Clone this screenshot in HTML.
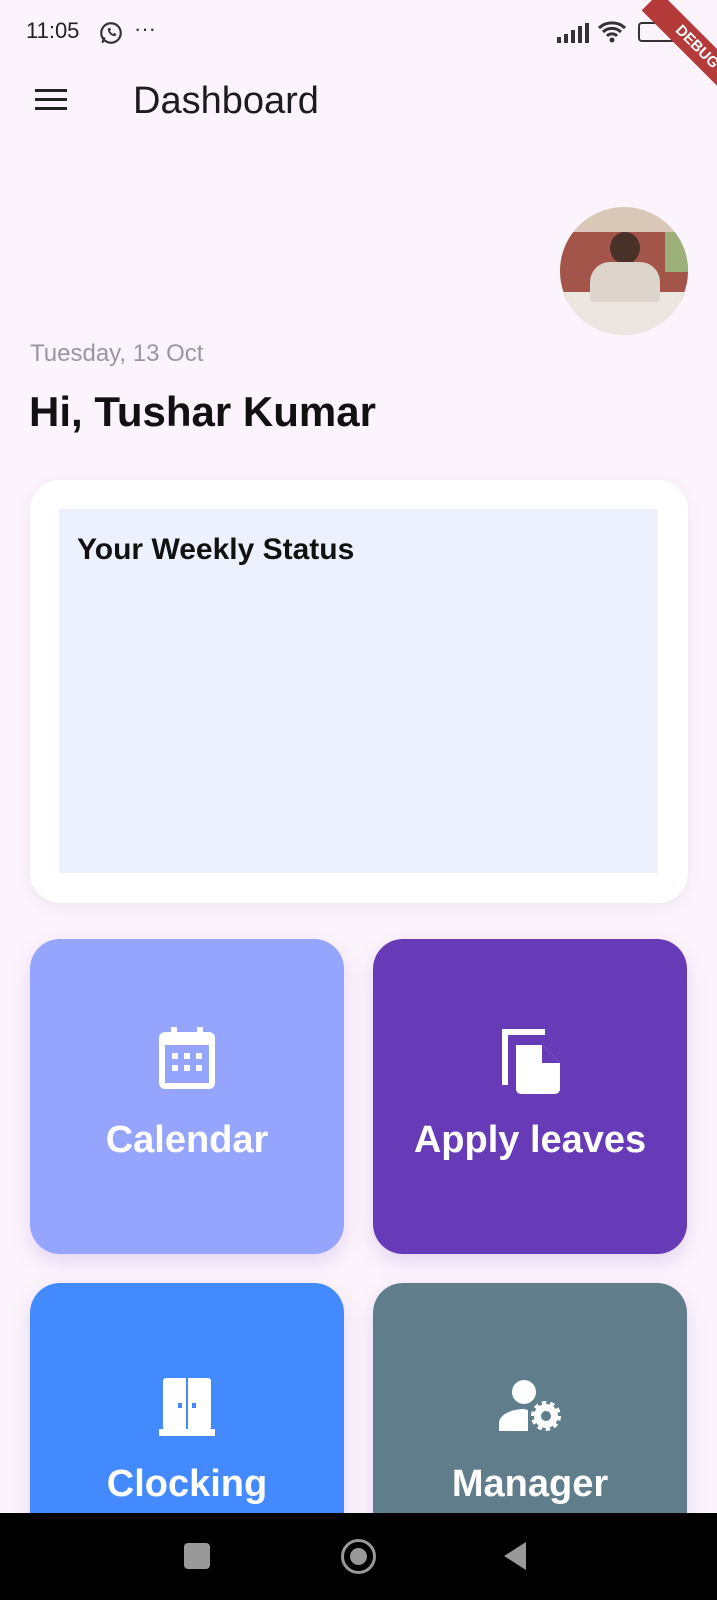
<!DOCTYPE html>
<html><head><meta charset="utf-8"><style>
*{margin:0;padding:0;box-sizing:border-box}
body{width:717px;height:1600px;background:#fcf4fc;font-family:"Liberation Sans",sans-serif;position:relative;overflow:hidden}
.abs{position:absolute}
.tile{position:absolute;width:314px;height:315px;border-radius:30px;color:#fff;box-shadow:0 8px 20px rgba(120,80,200,0.18)}
.tile .lbl{position:absolute;left:0;right:0;top:180px;text-align:center;font-size:38px;font-weight:bold}
.tile svg{position:absolute;left:50%;top:88px;transform:translateX(-50%)}
</style></head><body>
<div class="abs" style="left:26px;top:18px;font-size:22px;color:#222">11:05</div>
<svg class="abs" style="left:98px;top:20px" width="26" height="26" viewBox="0 0 24 24"><circle cx="12" cy="12" r="9" fill="none" stroke="#333" stroke-width="2"/><path d="M4 21l2-5" stroke="#333" stroke-width="2"/><path d="M9 8c0 4 3 7 7 7l1-2-2-1-1 1c-1-.5-2.5-2-3-3l1-1-1-2z" fill="#333"/></svg>
<div class="abs" style="left:134px;top:16px;font-size:22px;color:#333">···</div>
<svg class="abs" style="left:556px;top:22px" width="34" height="22"><rect x="1" y="15" width="4" height="6" fill="#333"/><rect x="8" y="12" width="4" height="9" fill="#333"/><rect x="15" y="8" width="4" height="13" fill="#333"/><rect x="22" y="4" width="4" height="17" fill="#333"/><rect x="29" y="1" width="4" height="20" fill="#333"/></svg>
<svg class="abs" style="left:597px;top:20px" width="30" height="24" viewBox="0 0 30 24"><path d="M2 8a19 19 0 0 1 26 0M6 12a13 13 0 0 1 18 0M10 16a7 7 0 0 1 10 0" stroke="#333" stroke-width="3" fill="none"/><circle cx="15" cy="20" r="2.5" fill="#333"/></svg>
<div class="abs" style="left:638px;top:22px;width:40px;height:20px;border:2px solid #333;border-radius:4px"></div>
<div class="abs" style="width:130px;height:26px;background:#b53a3a;transform:rotate(45deg);transform-origin:0 0;color:#fff;font-size:15px;font-weight:bold;text-align:center;line-height:26px;left:660px;top:-8px">DEBUG</div>
<div class="abs" style="left:35px;top:89px;width:32px;height:3px;background:#222;box-shadow:0 9px 0 #222,0 18px 0 #222"></div>
<div class="abs" style="left:133px;top:80px;font-size:38px;color:#1d1b20">Dashboard</div>
<div class="abs" style="left:560px;top:207px;width:128px;height:128px;border-radius:50%;overflow:hidden;background:#d9c8b8">
<div class="abs" style="left:0;top:25px;width:128px;height:70px;background:#a4554a"></div>
<div class="abs" style="left:0;top:85px;width:128px;height:50px;background:#ece6e0"></div>
<div class="abs" style="left:50px;top:25px;width:30px;height:32px;border-radius:50%;background:#4a3128"></div>
<div class="abs" style="left:30px;top:55px;width:70px;height:40px;border-radius:20px 20px 4px 4px;background:#ddd5cc"></div>
<div class="abs" style="left:105px;top:25px;width:23px;height:40px;background:#9cb07a"></div>
</div>
<div class="abs" style="left:30px;top:340px;font-size:24px;color:#9a959e">Tuesday, 13 Oct</div>
<div class="abs" style="left:29px;top:388px;font-size:42px;font-weight:bold;color:#111">Hi, Tushar Kumar</div>
<div class="abs" style="left:30px;top:480px;width:658px;height:423px;background:#fff;border-radius:30px;box-shadow:0 4px 14px rgba(150,120,180,0.12)"></div>
<div class="abs" style="left:59px;top:509px;width:599px;height:364px;background:#ecf1fd"></div>
<div class="abs" style="left:77px;top:533px;font-size:30px;font-weight:bold;color:#111">Your Weekly Status</div>
<div class="tile" style="left:30px;top:939px;background:#95a4fd">
<svg width="56" height="62" viewBox="0 0 56 62"><rect x="12" y="0" width="6" height="10" fill="#fff"/><rect x="38" y="0" width="6" height="10" fill="#fff"/><path d="M6 5h44a6 6 0 0 1 6 6v45a6 6 0 0 1-6 6H6a6 6 0 0 1-6-6V11a6 6 0 0 1 6-6z" fill="#fff"/><rect x="6" y="18" width="44" height="38" fill="#95a4fd"/><g fill="#fff"><rect x="13" y="26" width="6" height="6"/><rect x="25" y="26" width="6" height="6"/><rect x="37" y="26" width="6" height="6"/><rect x="13" y="38" width="6" height="6"/><rect x="25" y="38" width="6" height="6"/><rect x="37" y="38" width="6" height="6"/></g></svg>
<div class="lbl">Calendar</div></div>
<div class="tile" style="left:373px;top:939px;background:#673ab7">
<svg width="60" height="68" viewBox="0 0 60 68"><path d="M2 2h43v6H8v50H2z" fill="#fff"/><path d="M16 18h26l18 18v26a5 5 0 0 1-5 5H21a5 5 0 0 1-5-5z" fill="#fff"/><path d="M42 18v18h18" fill="#673ab7"/></svg>
<div class="lbl">Apply leaves</div></div>
<div class="tile" style="left:30px;top:1283px;background:#448aff">
<svg width="56" height="58" viewBox="0 0 56 58" style="top:95px"><rect x="4" y="0" width="48" height="52" rx="3" fill="#fff"/><rect x="27" y="0" width="2" height="52" fill="#448aff"/><rect x="0" y="51" width="56" height="7" fill="#fff"/><rect x="19" y="25" width="4" height="5" fill="#448aff"/><rect x="33" y="25" width="4" height="5" fill="#448aff"/></svg>
<div class="lbl">Clocking</div></div>
<div class="tile" style="left:373px;top:1283px;background:#607d8b">
<svg width="62" height="56" viewBox="0 0 62 56" style="top:96px"><circle cx="25" cy="13" r="12" fill="#fff"/><path d="M0 52v-8c0-8 12-14 25-14l4 1v21z" fill="#fff"/><circle cx="47" cy="37" r="12" fill="#fff" stroke="#fff" stroke-width="6" stroke-dasharray="4 3.5"/><circle cx="47" cy="37" r="5" fill="#607d8b"/></svg>
<div class="lbl">Manager</div></div>
<div class="abs" style="left:0;top:1513px;width:717px;height:87px;background:#000"></div>
<div class="abs" style="left:184px;top:1543px;width:26px;height:26px;background:#999;border-radius:4px"></div>
<div class="abs" style="left:341px;top:1539px;width:35px;height:35px;border:3px solid #999;border-radius:50%"></div>
<div class="abs" style="left:350px;top:1548px;width:17px;height:17px;background:#999;border-radius:50%"></div>
<svg class="abs" style="left:502px;top:1541px" width="26" height="30"><path d="M24 1v28L2 15z" fill="#999"/></svg>
</body></html>
